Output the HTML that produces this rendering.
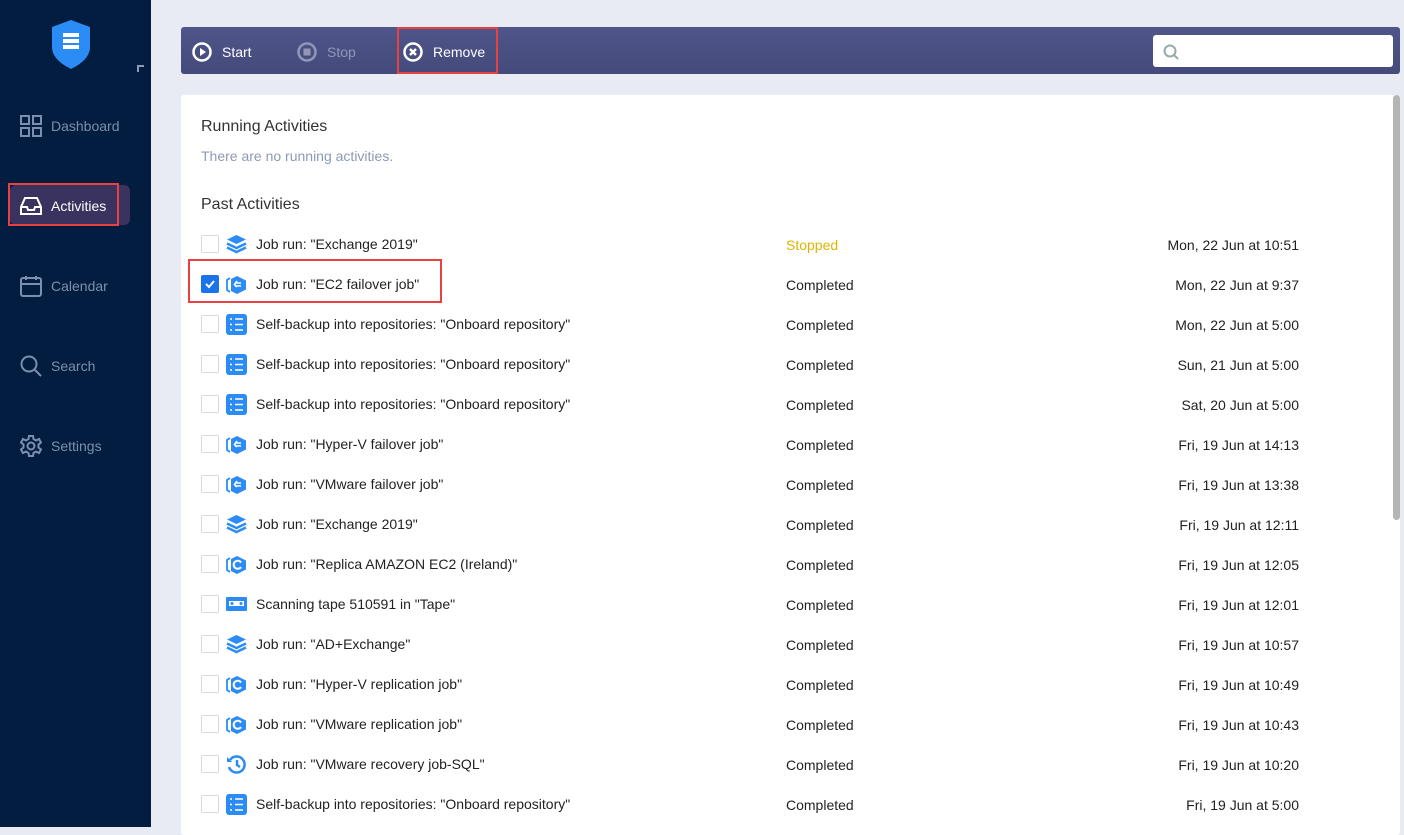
<!DOCTYPE html><html><head><style>
body{margin:0;width:1404px;height:827px;overflow:hidden;background:#e8ebf3;font-family:"Liberation Sans",sans-serif;position:relative}
.sb{position:absolute;left:0;top:0;width:151px;height:827px;background:#021d40}
.nav{position:absolute;left:20px;font-size:14px;color:#7d8fb0;display:flex;align-items:center;gap:9px}
.nav svg{width:22px;height:22px}
.tb{position:absolute;left:181px;top:27px;width:1219px;height:47px;background:linear-gradient(#50558a,#444a7a);border-radius:3px}
.btn{position:absolute;top:1px;height:47px;display:flex;align-items:center;gap:10px;color:#fff;font-size:14px}
.card{position:absolute;left:181px;top:95px;width:1219px;height:740px;background:#fff;border-radius:3px}
.row{position:absolute;left:20px;width:1100px;height:20px;font-size:14px;color:#222}
.cb{position:absolute;left:0;top:0;width:16px;height:16px;border:1px solid #d5d9e0;border-radius:2px;background:#fff}
.ic{position:absolute;left:25px;top:-1px;width:21px;height:21px}
.tx{position:absolute;left:55px;top:1px}
.st{position:absolute;left:585px;top:2px}
.dt{position:absolute;right:2px;top:2px}
</style></head><body>
<div class="sb">
<svg style="position:absolute;left:51px;top:19px" width="40" height="50" viewBox="0 0 40 50"><path d="M20 1 L39 8 V28 C39 38 30 45 20 50 C10 45 1 38 1 28 V8 Z" fill="#2a8cf4"/><rect x="12" y="14" width="16" height="4" fill="#fff"/><rect x="12" y="20" width="16" height="4" fill="#fff"/><rect x="12" y="26" width="16" height="4" fill="#fff"/></svg>
<div style="position:absolute;left:137px;top:65px;width:5px;height:5px;border-left:2px solid #8a99b5;border-top:2px solid #8a99b5"></div>
<div class="nav" style="top:115px"><svg viewBox="0 0 22 22" fill="none" stroke="#7d8fb0" stroke-width="2"><rect x="1" y="1" width="8" height="8"/><rect x="13" y="1" width="8" height="8"/><rect x="1" y="13" width="8" height="8"/><rect x="13" y="13" width="8" height="8"/></svg>Dashboard</div>
<div style="position:absolute;left:10px;top:185px;width:120px;height:40px;background:#3a335f;border-radius:6px"></div>
<div style="position:absolute;left:8px;top:183px;width:111px;height:43px;border:2px solid #e8413f;box-sizing:border-box"></div>
<div class="nav" style="top:195px;color:#fff"><svg viewBox="0 0 22 22" fill="none" stroke="#fff" stroke-width="2"><path d="M1 12 L5 3 H17 L21 12 V19 H1 Z M1 12 H7 L8 15 H14 L15 12 H21"/></svg>Activities</div>
<div class="nav" style="top:275px"><svg viewBox="0 0 22 22" fill="none" stroke="#7d8fb0" stroke-width="2"><rect x="1" y="3" width="20" height="18" rx="2"/><path d="M1 9H21M6 1V5M16 1V5"/></svg>Calendar</div>
<div class="nav" style="top:355px"><svg viewBox="0 0 22 22" fill="none" stroke="#7d8fb0" stroke-width="2"><circle cx="9" cy="9" r="7.5"/><path d="M15 15L21 21"/></svg>Search</div>
<div class="nav" style="top:435px"><svg viewBox="0 0 22 22" fill="none" stroke="#7d8fb0" stroke-width="2"><circle cx="11" cy="11" r="3.5"/><path d="M9 1H13L13.5 4L16 5.5L19 4L21 7.5L18.5 9.5V12.5L21 14.5L19 18L16 16.5L13.5 18L13 21H9L8.5 18L6 16.5L3 18L1 14.5L3.5 12.5V9.5L1 7.5L3 4L6 5.5L8.5 4Z"/></svg>Settings</div>
</div>
<div class="tb">
<div class="btn" style="left:11px"><svg width="20" height="20" viewBox="0 0 20 20"><circle cx="10" cy="10" r="8.5" fill="none" stroke="#fff" stroke-width="2.5"/><path d="M8 6L14 10L8 14Z" fill="#fff"/></svg>Start</div>
<div class="btn" style="left:116px;color:#9297b8"><svg width="20" height="20" viewBox="0 0 20 20"><circle cx="10" cy="10" r="8.5" fill="none" stroke="#9297b8" stroke-width="2.5"/><rect x="6.5" y="6.5" width="7" height="7" fill="#9297b8"/></svg>Stop</div>
<div class="btn" style="left:222px"><svg width="20" height="20" viewBox="0 0 20 20"><circle cx="10" cy="10" r="8.5" fill="none" stroke="#fff" stroke-width="2.5"/><path d="M7 7L13 13M13 7L7 13" stroke="#fff" stroke-width="2.5"/></svg>Remove</div>
<div style="position:absolute;left:216px;top:0;width:101px;height:47px;border:2px solid #e8413f;box-sizing:border-box"></div>
<div style="position:absolute;left:972px;top:8px;width:240px;height:32px;background:#fff;border-radius:3px"><svg style="position:absolute;left:10px;top:9px" width="16" height="16" viewBox="0 0 16 16" fill="none" stroke="#9aa" stroke-width="2"><circle cx="7" cy="7" r="5.5"/><path d="M11 11L15 15"/></svg></div>
</div>
<div class="card">
<div style="position:absolute;left:20px;top:23px;font-size:16px;color:#333">Running Activities</div>
<div style="position:absolute;left:20px;top:53px;font-size:14px;color:#8d9ab5">There are no running activities.</div>
<div style="position:absolute;left:20px;top:101px;font-size:16px;color:#333">Past Activities</div>
<div style="position:absolute;left:1212px;top:0;width:7px;height:425px;background:#b5b5b5;border-radius:4px"></div>
<div id="rows"></div>
</div>
<div style="position:absolute;left:188px;top:259px;width:254px;height:44px;border:2px solid #e8413f;box-sizing:border-box"></div>
<script>
var I={
s:'<svg class="ic" viewBox="0 0 21 21"><path d="M10.5 1L20 5.5L10.5 10L1 5.5Z" fill="#2a8cf4"/><path d="M1 9.5L10.5 14L20 9.5M1 13.5L10.5 18L20 13.5" fill="none" stroke="#2a8cf4" stroke-width="2.5"/></svg>',
f:'<svg class="ic" viewBox="0 0 21 21"><path d="M11 2L20 6.5V15.5L11 20L5 17V5Z" fill="#2a8cf4"/><path d="M4 4L1 6V16L4 18" fill="none" stroke="#2a8cf4" stroke-width="1.8"/><path d="M15 9H9M11 7L8.5 10.5L11 13M9 12H15" fill="none" stroke="#fff" stroke-width="1.6"/></svg>',
b:'<svg class="ic" viewBox="0 0 21 21"><rect x="0" y="0" width="21" height="21" rx="3" fill="#2a8cf4"/><path d="M4 5H6M9 5H17M4 10.5H6M9 10.5H17M4 16H6M9 16H17" stroke="#fff" stroke-width="1.6"/></svg>',
r:'<svg class="ic" viewBox="0 0 21 21"><path d="M11 2L20 6.5V15.5L11 20L5 17V5Z" fill="#2a8cf4"/><path d="M4 4L1 6V16L4 18" fill="none" stroke="#2a8cf4" stroke-width="1.8"/><path d="M15 8.5A4 4 0 1 0 15 13" fill="none" stroke="#fff" stroke-width="2"/></svg>',
t:'<svg class="ic" viewBox="0 0 21 21"><rect x="0" y="3" width="21" height="14" rx="1" fill="#2a8cf4"/><rect x="3" y="7" width="15" height="5" fill="#fff"/><circle cx="6" cy="9.5" r="1.5" fill="#2a8cf4"/><circle cx="15" cy="9.5" r="1.5" fill="#2a8cf4"/></svg>',
v:'<svg class="ic" viewBox="0 0 21 21"><path d="M4 6A8 8 0 1 1 3 13" fill="none" stroke="#2a8cf4" stroke-width="2.5"/><path d="M1 3V8H6Z" fill="#2a8cf4"/><path d="M11 6V11L14 13" fill="none" stroke="#2a8cf4" stroke-width="2.5"/></svg>'};
var R=[['s','Job run: "Exchange 2019"','Stopped','Mon, 22 Jun at 10:51'],['f','Job run: "EC2 failover job"','Completed','Mon, 22 Jun at 9:37'],['b','Self-backup into repositories: "Onboard repository"','Completed','Mon, 22 Jun at 5:00'],['b','Self-backup into repositories: "Onboard repository"','Completed','Sun, 21 Jun at 5:00'],['b','Self-backup into repositories: "Onboard repository"','Completed','Sat, 20 Jun at 5:00'],['f','Job run: "Hyper-V failover job"','Completed','Fri, 19 Jun at 14:13'],['f','Job run: "VMware failover job"','Completed','Fri, 19 Jun at 13:38'],['s','Job run: "Exchange 2019"','Completed','Fri, 19 Jun at 12:11'],['r','Job run: "Replica AMAZON EC2 (Ireland)"','Completed','Fri, 19 Jun at 12:05'],['t','Scanning tape 510591 in "Tape"','Completed','Fri, 19 Jun at 12:01'],['s','Job run: "AD+Exchange"','Completed','Fri, 19 Jun at 10:57'],['r','Job run: "Hyper-V replication job"','Completed','Fri, 19 Jun at 10:49'],['r','Job run: "VMware replication job"','Completed','Fri, 19 Jun at 10:43'],['v','Job run: "VMware recovery job-SQL"','Completed','Fri, 19 Jun at 10:20'],['b','Self-backup into repositories: "Onboard repository"','Completed','Fri, 19 Jun at 5:00']];
var h='';R.forEach(function(r,i){var chk=i==1?'<div class="cb" style="background:#1a73e8;border-color:#1a73e8"><svg width="16" height="16" viewBox="0 0 16 16"><path d="M4 8L7 11L12 5" fill="none" stroke="#fff" stroke-width="2"/></svg></div>':'<div class="cb"></div>';
h+='<div class="row" style="top:'+(140+i*40)+'px">'+chk+I[r[0]]+'<span class="tx">'+r[1]+'</span><span class="st" style="color:'+(i==0?'#e0b400':'#222')+'">'+r[2]+'</span><span class="dt">'+r[3]+'</span></div>';});
document.getElementById('rows').innerHTML=h;
</script>
</body></html>
